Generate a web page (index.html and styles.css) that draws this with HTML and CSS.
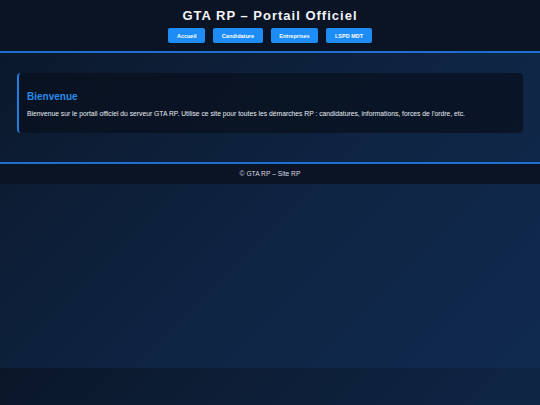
FILE: index.html
```html
<!DOCTYPE html>
<html lang="fr">
<head>
<meta charset="utf-8">
<title>GTA RP – Portail Officiel</title>
<link rel="stylesheet" href="styles.css">
</head>
<body>
<header class="site-header">
  <h1 class="site-title">GTA RP – Portail Officiel</h1>
  <nav class="nav">
    <a class="nav-btn" href="#">Accueil</a>
    <a class="nav-btn" href="#">Candidature</a>
    <a class="nav-btn" href="#">Entreprises</a>
    <a class="nav-btn" href="#">LSPD MDT</a>
  </nav>
</header>
<main class="main">
  <section class="card">
    <h2 class="card-title">Bienvenue</h2>
    <p class="card-text">Bienvenue sur le portail officiel du serveur GTA RP. Utilise ce site pour toutes les démarches RP : candidatures, informations, forces de l'ordre, etc.</p>
  </section>
</main>
<footer class="site-footer">© GTA RP – Site RP</footer>
</body>
</html>
```

FILE: styles.css
```css
html {
  background: linear-gradient(135deg, #0b1729 0%, #0e2442 55%, #10294f 100%);
  background-size: 100% 368px;
  background-repeat: repeat-y;
  min-height: 100%;
}
body {
  margin: 0;
  font-family: "Liberation Sans", Arial, sans-serif;
  color: #e6ebf2;
}
.site-header {
  background: #0b1424;
  border-bottom: 2px solid #1f6fd0;
  padding: 8px 0 8px;
  text-align: center;
}
.site-title {
  margin: 0;
  font-size: 13px;
  line-height: 15px;
  font-weight: bold;
  letter-spacing: 1px;
  color: #f2f4f8;
}
.nav {
  display: flex;
  justify-content: center;
  gap: 8px;
  margin-top: 5px;
}
.nav-btn {
  display: inline-flex;
  align-items: center;
  height: 15px;
  padding: 0 8.7px;
  background: #1e8cf5;
  color: #ffffff;
  font-size: 5.5px;
  font-weight: bold;
  text-decoration: none;
  border-radius: 2px;
}
.main {
  padding: 20px 17px 29px;
}
.card {
  background: rgba(8, 16, 30, 0.75);
  border-left: 2px solid #1e7fe0;
  border-radius: 4px;
  padding: 18px 10px 16px 8px;
}
.card-title {
  margin: 0 0 7px;
  font-size: 10px;
  line-height: 11.5px;
  font-weight: bold;
  color: #2a8ae8;
}
.card-text {
  margin: 0;
  font-size: 6.75px;
  line-height: 7.2px;
  color: #e8ecf2;
}
.site-footer {
  background: #0b1424;
  border-top: 2px solid #1f6fd0;
  height: 20px;
  line-height: 20px;
  text-align: center;
  font-size: 6.7px;
  color: #d4dae3;
}
```
